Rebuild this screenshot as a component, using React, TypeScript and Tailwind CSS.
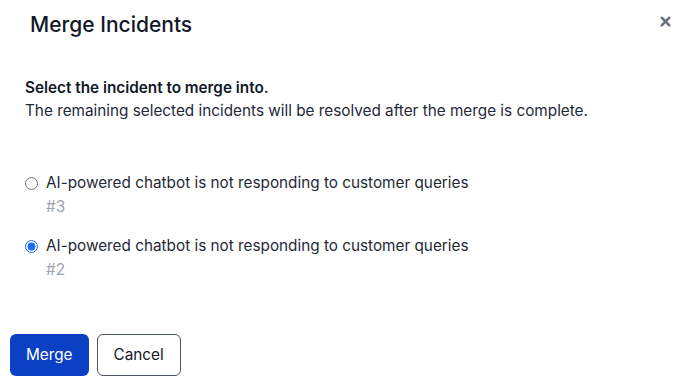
import { X } from 'lucide-react';

const incidents = [
    { id: 3, title: 'AI-powered chatbot is not responding to customer queries' },
    { id: 2, title: 'AI-powered chatbot is not responding to customer queries' },
];

const App = () => {
    return (
        <div className="w-[685px] h-[385px] bg-white font-['Inter',sans-serif] text-[#111827] overflow-hidden">
            {/* Header */}
            <div className="flex items-start justify-between pl-[30px] pr-[12px] pt-[11px]">
                <h1 className="text-[21px] leading-[28px] font-medium">Merge Incidents</h1>
                <X className="text-[#6b7280] mt-[3px]" size={15} strokeWidth={4} />
            </div>

            {/* Body */}
            <div className="px-[25px] pt-[37px]">
                <p className="text-[15.3px] leading-[23px] font-semibold">Select the incident to merge into.</p>
                <p className="text-[15.3px] leading-[23px] text-[#1f2937]">
                    The remaining selected incidents will be resolved after the merge is complete.
                </p>

                <div className="flex flex-col gap-[15px] pt-[49px]">
                    {incidents.map((inc) => (
                        <label key={inc.id} className="flex items-start gap-[8px]">
                            <input
                                type="radio"
                                name="target"
                                defaultChecked={inc.id === 2}
                                className="mt-[6px] w-[13px] h-[13px] accent-[#1a6cff]"
                            />
                            <div className="flex flex-col">
                                <span className="text-[15.3px] leading-[24px] text-[#1f2937]">{inc.title}</span>
                                <span className="text-[15.3px] leading-[24px] text-[#9ca3af]">#{inc.id}</span>
                            </div>
                        </label>
                    ))}
                </div>
            </div>

            {/* Actions */}
            <div className="flex gap-[8px] px-[10px] pt-[52px]">
                <button className="h-[42px] px-[16px] rounded-[6px] bg-[#0b3fc4] text-white text-[15.3px]">Merge</button>
                <button className="h-[42px] px-[16px] rounded-[6px] bg-white border border-[#4b5563] text-[#111827] text-[15.3px]">
                    Cancel
                </button>
            </div>
        </div>
    );
};

export default App;
